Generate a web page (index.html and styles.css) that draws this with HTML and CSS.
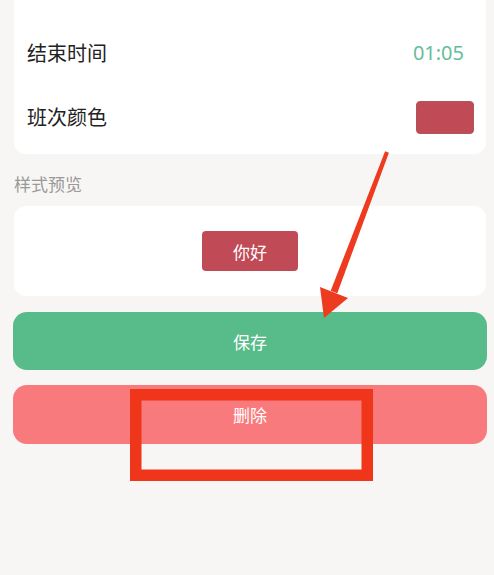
FILE: index.html
```
<!DOCTYPE html>
<html lang="zh-CN">
<head>
<meta charset="utf-8">
<title>班次</title>
<link rel="stylesheet" href="styles.css">
</head>
<body>
<div class="page">
  <div class="card settings">
    <div class="row"><span class="label">结束时间</span><span class="time">01:05</span></div>
    <div class="row"><span class="label">班次颜色</span><span class="swatch"></span></div>
  </div>
  <div class="section-label">样式预览</div>
  <div class="card preview">
    <span class="chip">你好</span>
  </div>
  <button class="btn save">保存</button>
  <button class="btn delete">删除</button>
</div>
<svg class="overlay" width="494" height="575" viewBox="0 0 494 575">
  <polygon fill="#ee3a1e" points="388.9,152.7 385.1,151.3 330.7,290.8 337.3,293.2"/>
  <polygon fill="#ee3a1e" points="320,287 348,298 324,318"/>
  <rect x="135.75" y="394.75" width="231.5" height="80.5" fill="none" stroke="#f0361a" stroke-width="11.5"/>
</svg>
</body>
</html>
```
FILE: styles.css
```
html, body {
  margin: 0;
  padding: 0;
}
body {
  background: #f7f6f4;
  font-family: "Noto Sans CJK SC", "Noto Sans", sans-serif;
  width: 494px;
  height: 575px;
  overflow: hidden;
  position: relative;
}
.page {
  padding: 0 7px 0 13px;
  display: flex;
  flex-direction: column;
}
.card {
  background: #ffffff;
  border-radius: 12px;
  margin: 0 1px;
}
.settings {
  margin-top: -20px;
  padding: 41px 12px 5px 13px;
}
.row {
  height: 64px;
  display: flex;
  align-items: center;
  justify-content: space-between;
}
.label {
  font-size: 20px;
  color: #222222;
  line-height: 24px;
}
.time {
  font-family: "Noto Sans", sans-serif;
  font-size: 20px;
  color: #66bd9c;
  margin-right: 10px;
  line-height: 24px;
}
.swatch {
  width: 58px;
  height: 33px;
  background: #c04a55;
  border-radius: 4px;
  border: 1px solid #b0545c;
  box-sizing: border-box;
}
.section-label {
  padding: 20px 0 12px 1px;
  font-size: 17px;
  line-height: 20px;
  color: #999999;
}
.preview {
  height: 90px;
  display: flex;
  align-items: center;
  justify-content: center;
}
.chip {
  width: 96px;
  height: 40px;
  background: #c04a55;
  border-radius: 4px;
  color: #ffffff;
  font-size: 17px;
  display: flex;
  align-items: center;
  justify-content: center;
}
.btn {
  border: none;
  font-family: "Noto Sans CJK SC", sans-serif;
  font-size: 17px;
  color: #ffffff;
  border-radius: 14px;
  width: 100%;
  padding: 0;
}
.save {
  margin-top: 16px;
  height: 58px;
  background: #57bb8a;
}
.delete {
  margin-top: 15px;
  height: 59px;
  background: #f97a7c;
}
.overlay {
  position: absolute;
  left: 0;
  top: 0;
  pointer-events: none;
}
```
